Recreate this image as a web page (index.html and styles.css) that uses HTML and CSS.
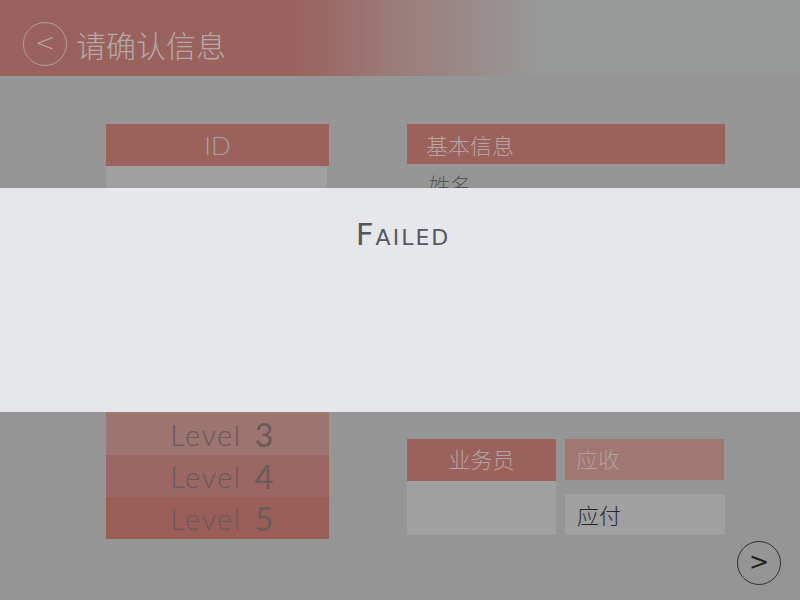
FILE: index.html
```html
<!DOCTYPE html>
<html lang="zh">
<head>
<meta charset="utf-8">
<title>请确认信息</title>
<link rel="stylesheet" href="styles.css">
</head>
<body>
<div class="page">
  <header class="topbar">
    <span class="back-btn">&lt;</span>
    <h1 class="title">请确认信息</h1>
  </header>
  <main class="content">
    <section class="col-left">
      <div class="red-head id-head">ID</div>
      <div class="id-value"></div>
      <ul class="levels">
        <li class="level level-1">Level <b>1</b></li>
        <li class="level level-2">Level <b>2</b></li>
        <li class="level level-3">Level <b>3</b></li>
        <li class="level level-4">Level <b>4</b></li>
        <li class="level level-5">Level <b>5</b></li>
      </ul>
    </section>
    <section class="col-right">
      <div class="red-head info-head">基本信息</div>
      <div class="info-body">
        <div class="info-row">姓名</div>
      </div>
      <div class="bottom-group">
        <div class="staff">
          <div class="red-head staff-head">业务员</div>
          <div class="staff-value"></div>
        </div>
        <div class="money">
          <div class="money-head">应收</div>
          <div class="money-box">应付</div>
        </div>
      </div>
    </section>
  </main>
  <span class="next-btn">&gt;</span>
  <div class="dialog">
    <p class="dialog-text">Failed</p>
  </div>
</div>
</body>
</html>
```

FILE: styles.css
```css
* { box-sizing: border-box; }
html, body { margin: 0; padding: 0; }
body {
  width: 800px;
  height: 600px;
  overflow: hidden;
  background: #959595;
  font-family: "Noto Sans CJK SC", "Noto Sans", sans-serif;
}
.page {
  position: relative;
  width: 800px;
  height: 600px;
}
.topbar {
  height: 76px;
  display: flex;
  align-items: center;
  padding: 12px 0 0 23px;
  background: linear-gradient(to right, #9a625c 0px, #9a625c 290px, #9a7d7b 400px, #979998 540px, #979998 800px);
}
.back-btn {
  width: 44px;
  height: 44px;
  border: 1px solid #b09f9e;
  border-radius: 50%;
  display: flex;
  align-items: center;
  justify-content: center;
  color: #b4a8a7;
  font-family: "DejaVu Sans", sans-serif;
  font-size: 24px;
  font-weight: 300;
  padding-bottom: 3px;
}
.title {
  margin: 0 0 0 9px;
  font-size: 30px;
  font-weight: 300;
  color: #b4a9a8;
  letter-spacing: 0;
}
.content {
  display: flex;
  gap: 78px;
  padding: 48px 0 0 106px;
}
.col-left { width: 223px; }
.col-right { width: 318px; }
.red-head {
  background: #9b615b;
  color: #b1a3a2;
  font-weight: 300;
}
.id-head {
  height: 42px;
  display: flex;
  align-items: center;
  justify-content: center;
  font-family: "Lato", "Open Sans", sans-serif;
  font-size: 26px;
  font-weight: 300;
  color: #aaa0a0;
}
.id-value {
  width: 221px;
  height: 163px;
  background: #a0a0a0;
}
.levels {
  list-style: none;
  margin: 0;
  padding: 0;
}
.level {
  height: 42px;
  display: flex;
  align-items: center;
  justify-content: center;
  gap: 13px;
  padding-left: 10px;
  font-family: "Lato", "Open Sans", sans-serif;
  font-size: 29px;
  font-weight: 300;
  letter-spacing: 1.5px;
  color: #6a5a5a;
}
.level b {
  font-weight: 400;
  font-size: 32px;
}
.level-1 { background: #9e8a88; }
.level-2 { background: #9d7e7b; }
.level-3 { background: #9c7470; }
.level-4 { background: #9b6762; }
.level-5 { background: #9a5e58; }
.info-head {
  height: 40px;
  display: flex;
  align-items: center;
  padding-left: 19px;
  font-size: 22px;
  color: #b7a5a3;
}
.info-body {
  height: 275px;
  padding-left: 22px;
}
.info-row {
  height: 40px;
  line-height: 40px;
  font-size: 21px;
  font-weight: 300;
  color: #555555;
}
.bottom-group {
  display: flex;
  gap: 9px;
}
.staff { width: 150px; }
.staff-head {
  height: 42px;
  display: flex;
  align-items: center;
  justify-content: center;
  padding-bottom: 4px;
  font-size: 22px;
  color: #b3a4a3;
}
.staff-value {
  width: 149px;
  height: 54px;
  background: #a0a0a0;
}
.money { width: 161px; }
.money-head {
  width: 159px;
  height: 41px;
  background: #a07773;
  display: flex;
  align-items: center;
  padding: 0 0 4px 11px;
  font-size: 22px;
  font-weight: 300;
  color: #b49f9d;
}
.money-box {
  margin-top: 14px;
  height: 41px;
  background: #a0a0a0;
  display: flex;
  align-items: center;
  padding: 0 0 2px 12px;
  font-size: 22px;
  font-weight: 300;
  color: #2a2a2a;
}
.next-btn {
  position: absolute;
  left: 737px;
  top: 541px;
  width: 44px;
  height: 44px;
  border: 1px solid #333;
  border-radius: 50%;
  display: flex;
  align-items: center;
  justify-content: center;
  color: #1e1e1e;
  font-family: "DejaVu Sans", sans-serif;
  font-size: 24px;
  padding-bottom: 3px;
}
.dialog {
  position: absolute;
  left: 0;
  top: 188px;
  width: 800px;
  height: 224px;
  background: #e6e7ea;
  display: flex;
  justify-content: center;
}
.dialog-text {
  margin: 28px 0 0 6px;
  font-family: "DejaVu Sans", sans-serif;
  font-variant: small-caps;
  font-size: 31px;
  letter-spacing: 2px;
  font-weight: 400;
  color: #56585d;
}
```
